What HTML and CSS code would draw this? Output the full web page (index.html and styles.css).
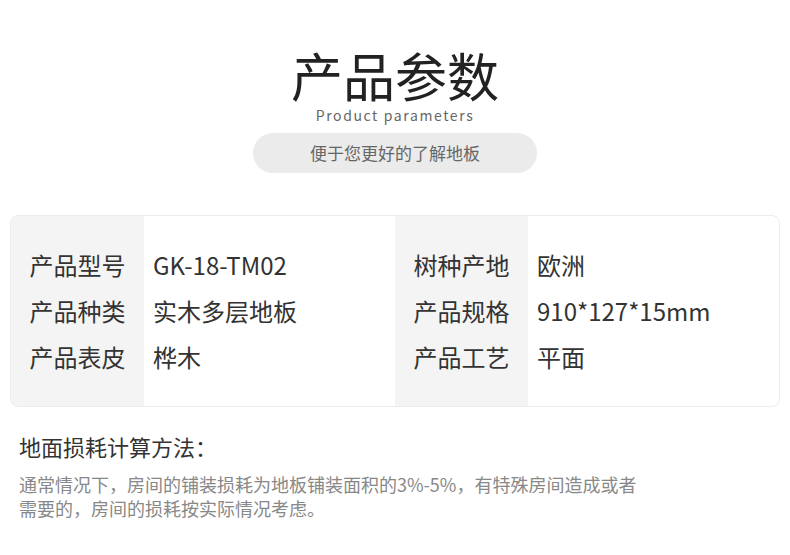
FILE: index.html
```html
<!DOCTYPE html>
<html lang="zh-CN">
<head>
    <meta charset="UTF-8">
    <meta name="viewport" content="width=device-width, initial-scale=1.0">
    <title>产品参数</title>
    <link rel="stylesheet" href="styles.css">
</head>
<body>
    <header class="intro">
        <h1>产品参数</h1>
        <p class="subtitle">Product parameters</p>
        <div class="pill">便于您更好的了解地板</div>
    </header>

    <section class="params">
        <div class="col label">
            <span>产品型号</span>
            <span>产品种类</span>
            <span>产品表皮</span>
        </div>
        <div class="col value">
            <span>GK-18-TM02</span>
            <span>实木多层地板</span>
            <span>桦木</span>
        </div>
        <div class="col label">
            <span>树种产地</span>
            <span>产品规格</span>
            <span>产品工艺</span>
        </div>
        <div class="col value">
            <span>欧洲</span>
            <span>910*127*15mm</span>
            <span>平面</span>
        </div>
    </section>

    <section class="notes">
        <h3>地面损耗计算方法：</h3>
        <p>通常情况下，房间的铺装损耗为地板铺装面积的3%-5%，有特殊房间造成或者需要的，房间的损耗按实际情况考虑。</p>
    </section>
</body>
</html>
```

FILE: styles.css
```css
body {
    font-family: "Noto Sans CJK SC", "Noto Sans", sans-serif;
    background-color: #fff;
    color: #333;
    margin: 0;
    padding: 0;
}
.intro {
    display: flex;
    flex-direction: column;
    align-items: center;
    padding-top: 52px;
}
.intro h1 {
    margin: 0;
    font-size: 52px;
    line-height: 46px;
    font-weight: 400;
    color: #222;
}
.subtitle {
    margin: 9px 0 0;
    font-size: 14px;
    line-height: 16px;
    letter-spacing: 1.6px;
    color: #666;
}
.pill {
    margin-top: 10px;
    width: 284px;
    height: 40px;
    line-height: 40px;
    border-radius: 20px;
    background-color: #ebebeb;
    text-align: center;
    font-size: 17px;
    color: #666;
}
.params {
    display: grid;
    grid-template-columns: 133px 1fr 133px 1fr;
    margin: 42px 10px 0;
    height: 190px;
    border: 1px solid #ececec;
    border-radius: 8px;
    overflow: hidden;
}
.col {
    display: flex;
    flex-direction: column;
    justify-content: center;
    font-size: 24px;
    line-height: 46px;
    color: #333;
}
.col.label {
    background-color: #f4f4f4;
    align-items: center;
}
.col.value {
    padding-left: 9px;
}
.notes {
    padding: 0 19px;
    margin-top: 24px;
}
.notes h3 {
    margin: 0;
    font-size: 22px;
    line-height: 30px;
    font-weight: 400;
    color: #333;
}
.notes p {
    margin: 11px 0 0;
    max-width: 620px;
    font-size: 18px;
    line-height: 24px;
    color: #888;
}
```
